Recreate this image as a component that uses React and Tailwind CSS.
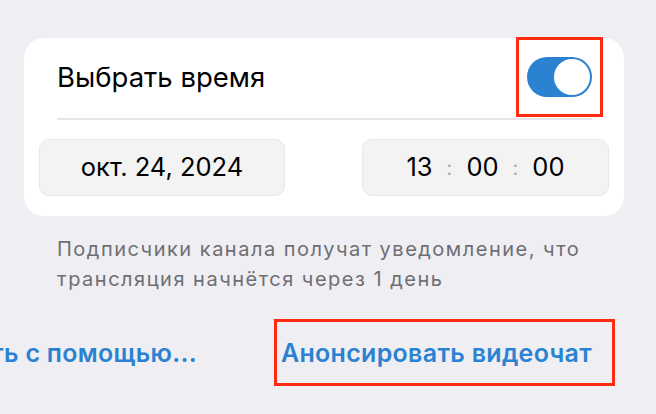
export default function App() {
    return (
        <div className="w-[656px] h-[414px] overflow-hidden bg-[#efeef3] font-['Inter','Noto_Sans',sans-serif] pt-[38px]">
            <div className="ml-[24px] w-[600px] h-[178px] bg-white rounded-[20px]">
                <div className="flex items-center justify-between h-[80px] pl-[33px] pr-[21px]">
                    <span className="text-[27.5px] text-black">Выбрать время</span>
                    <div className="-mt-[2px] w-[87px] h-[80px] border-[3px] border-[#ff2a0f] flex items-center justify-center">
                        <div className="w-[65px] h-[40px] rounded-full bg-[#2a82d1] flex items-center justify-end pr-[2px]">
                            <div className="w-[36px] h-[36px] rounded-full bg-white" />
                        </div>
                    </div>
                </div>
                <div className="ml-[33px] mr-[32px] h-[2px] bg-[#e6e6e9]" />
                <div className="flex justify-between px-[15px] mt-[19px]">
                    <div className="w-[246px] h-[57px] rounded-[10px] bg-[#f3f3f4] border border-[#e8e8ea] flex items-center justify-center text-[25.5px] text-black">
                        окт. 24, 2024
                    </div>
                    <div className="w-[247px] h-[57px] rounded-[10px] bg-[#f3f3f4] border border-[#e8e8ea] flex items-center justify-center gap-[14px] text-[25.5px] text-black">
                        <span>13</span>
                        <span className="text-[#a8a8ac] text-[20px]">:</span>
                        <span>00</span>
                        <span className="text-[#a8a8ac] text-[20px]">:</span>
                        <span>00</span>
                    </div>
                </div>
            </div>
            {/* footnote under the card */}
            <p className="ml-[57px] mt-[18px] text-[20px] leading-[30px] tracking-[1.5px] text-[#6e6e73] whitespace-nowrap">
                Подписчики канала получат уведомление, что
                <br />
                трансляция начнётся через 1 день
            </p>
            <div className="flex items-center mt-[25px]">
                <div className="w-[197px] overflow-hidden flex justify-end whitespace-nowrap pt-[3px]">
                    <span className="text-[25px] font-semibold text-[#2a82d1] tracking-[0.3px]">Начать с помощью...</span>
                </div>
                <div className="ml-[77px] w-[341px] h-[67px] border-[3px] border-[#ff2a0f] flex items-center pl-[4px] pt-[3px]">
                    <span className="text-[25px] font-semibold text-[#2a82d1] tracking-[0.3px] whitespace-nowrap">Анонсировать видеочат</span>
                </div>
            </div>
        </div>
    );
}
